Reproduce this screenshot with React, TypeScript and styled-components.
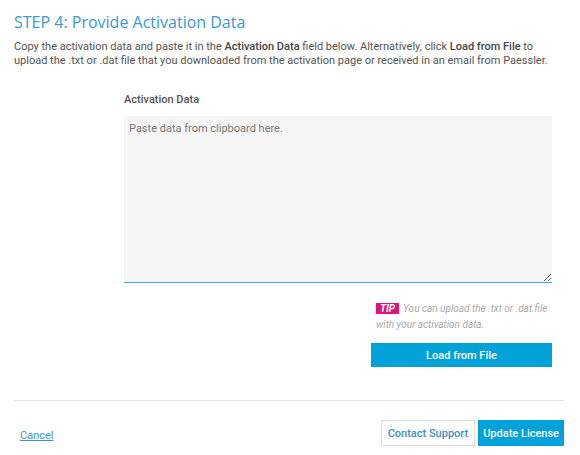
import React from "react";
import styled, { createGlobalStyle } from "styled-components";

const Global = createGlobalStyle`
  html, body { margin: 0; padding: 0; background: #fff; }
  body { font-family: Roboto, "Liberation Sans", sans-serif; }
`;

const Page = styled.div`
  width: 580px;
  height: 455px;
  box-sizing: border-box;
  padding: 11px 16px 0 14px;
  display: flex;
  flex-direction: column;
`;

const Title = styled.h2`
  margin: 0;
  font-family: "Open Sans", sans-serif;
  font-weight: 400;
  font-size: 16px;
  line-height: 22px;
  color: #3a9ad3;
`;

const Intro = styled.p`
  margin: 7px 0 0 0;
  font-size: 11px;
  line-height: 14px;
  color: #555;
  b { font-weight: 500; color: #444; }
`;

const Form = styled.div`
  margin: 25px 0 0 110px;
  width: 428px;
  display: flex;
  flex-direction: column;
`;

const Label = styled.label`
  font-size: 11px;
  font-weight: 500;
  color: #555;
  line-height: 14px;
`;

const Area = styled.textarea`
  margin-top: 9px;
  width: 428px;
  height: 167px;
  box-sizing: border-box;
  border: none;
  border-bottom: 1.5px solid #47a9cf;
  background: #f6f6f6;
  padding: 6px 5px;
  font-family: Roboto, sans-serif;
  font-size: 11px;
  color: #555;
  resize: vertical;
  outline: none;
  &::placeholder { color: #777; }
`;

const Side = styled.div`
  align-self: flex-end;
  width: 181px;
  margin-top: 18px;
  display: flex;
  flex-direction: column;
`;

const Tip = styled.div`
  padding-left: 5px;
  font-size: 10px;
  line-height: 16px;
  font-style: italic;
  color: #aaa;
`;

const Badge = styled.span`
  display: inline-block;
  background: #e2127a;
  color: #fff;
  font-weight: 700;
  font-style: italic;
  font-size: 10px;
  line-height: 11px;
  padding: 0 4px;
  margin-right: 4px;
`;

const Primary = styled.button<{ $wide?: boolean }>`
  border: 1px solid #00a0d8;
  background: #00a2d9;
  color: #fff;
  font-family: Roboto, sans-serif;
  font-size: 11px;
  font-weight: 500;
  height: ${(p) => (p.$wide ? "24px" : "26px")};
  padding: 0 4px;
  cursor: pointer;
  ${(p) => (p.$wide ? "width: 181px; margin-top: 10px;" : "")}
`;

const Secondary = styled.button`
  border: 1px solid #ddd;
  background: #fff;
  color: #3b8fc6;
  font-family: Roboto, sans-serif;
  font-size: 11px;
  font-weight: 500;
  height: 26px;
  padding: 0 6px;
  cursor: pointer;
`;

const Divider = styled.hr`
  margin: 33px 0 0 0;
  border: none;
  border-top: 1px solid #e4e4e4;
  width: 550px;
`;

const Footer = styled.div`
  display: flex;
  align-items: center;
  justify-content: space-between;
  margin-top: 19px;
  width: 550px;
`;

const CancelLink = styled.a`
  margin-left: 6px;
  margin-top: 4px;
  font-size: 11px;
  color: #3d95cf;
  text-decoration: underline;
`;

const Buttons = styled.div`
  display: flex;
  gap: 3px;
`;

export default function App() {
  return (
    <>
      <Global />
      <Page>
        <Title>STEP 4: Provide Activation Data</Title>
        <Intro>
          Copy the activation data and paste it in the <b>Activation Data</b> field below. Alternatively, click{" "}
          <b>Load from File</b> to upload the .txt or .dat file that you downloaded from the activation page or received in
          an email from Paessler.
        </Intro>
        <Form>
          <Label>Activation Data</Label>
          <Area placeholder="Paste data from clipboard here." />
          <Side>
            <Tip>
              <Badge>TIP</Badge>You can upload the .txt or .dat file with your activation data.
            </Tip>
            <Primary $wide>Load from File</Primary>
          </Side>
        </Form>
        <Divider />
        <Footer>
          <CancelLink href="#">Cancel</CancelLink>
          <Buttons>
            <Secondary>Contact Support</Secondary>
            <Primary>Update License</Primary>
          </Buttons>
        </Footer>
      </Page>
    </>
  );
}
